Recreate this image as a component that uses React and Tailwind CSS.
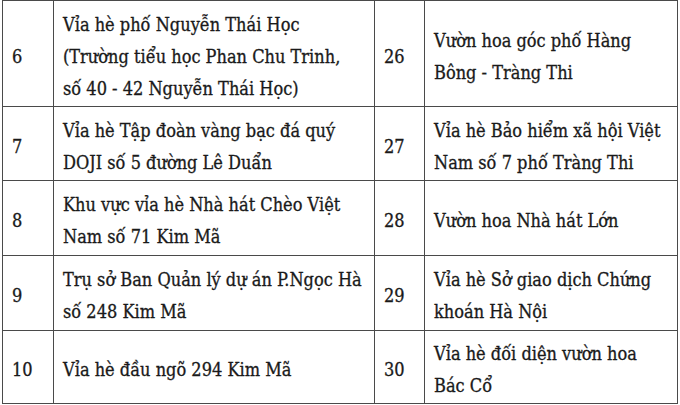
import React from 'react';

// Danh sách điểm (trích đoạn)
const rows = [
  {
    h: 'h-[106px]',
    a: '6',
    aText: ['Vỉa hè phố Nguyễn Thái Học', '(Trường tiểu học Phan Chu Trinh,', 'số 40 - 42 Nguyễn Thái Học)'],
    b: '26',
    bText: ['Vườn hoa góc phố Hàng', 'Bông - Tràng Thi'],
  },
  {
    h: 'h-[74px]',
    a: '7',
    aText: ['Vỉa hè Tập đoàn vàng bạc đá quý', 'DOJI số 5 đường Lê Duẩn'],
    b: '27',
    bText: ['Vỉa hè Bảo hiểm xã hội Việt', 'Nam số 7 phố Tràng Thi'],
  },
  {
    h: 'h-[75px]',
    a: '8',
    aText: ['Khu vực vỉa hè Nhà hát Chèo Việt', 'Nam số 71 Kim Mã'],
    b: '28',
    bText: ['Vườn hoa Nhà hát Lớn'],
  },
  {
    h: 'h-[75px]',
    a: '9',
    aText: ['Trụ sở Ban Quản lý dự án P.Ngọc Hà', 'số 248 Kim Mã'],
    b: '29',
    bText: ['Vỉa hè Sở giao dịch Chứng', 'khoán Hà Nội'],
  },
  {
    h: 'h-[73px]',
    a: '10',
    aText: ['Vỉa hè đầu ngõ 294 Kim Mã'],
    b: '30',
    bText: ['Vỉa hè đối diện vườn hoa', 'Bác Cổ'],
  },
];

const cell = 'border border-[#4a4a4a] pl-[9px] pr-1 pt-[6px] pb-0 align-middle';

const Lines = ({ lines }) => (
  <>
    {lines.map((l, i) => (
      <div key={i} className="whitespace-nowrap">{l}</div>
    ))}
  </>
);

export default function App() {
  return (
    <div className="w-[680px] h-[405px] bg-white overflow-hidden">
      <table className="ml-[2px] w-[675px] table-fixed border-collapse font-['DejaVu_Serif',serif] [font-stretch:condensed] text-[18px] leading-[32px] text-[#1a1a1a] [-webkit-text-stroke:0.3px_#1a1a1a]">
        <colgroup>
          <col className="w-[51px]" />
          <col className="w-[321px]" />
          <col className="w-[50px]" />
          <col className="w-[253px]" />
        </colgroup>
        <tbody>
          {rows.map((r) => (
            <tr key={r.a} className={r.h}>
              <td className={cell}>{r.a}</td>
              <td className={cell}><Lines lines={r.aText} /></td>
              <td className={cell}>{r.b}</td>
              <td className={cell}><Lines lines={r.bText} /></td>
            </tr>
          ))}
        </tbody>
      </table>
    </div>
  );
}
